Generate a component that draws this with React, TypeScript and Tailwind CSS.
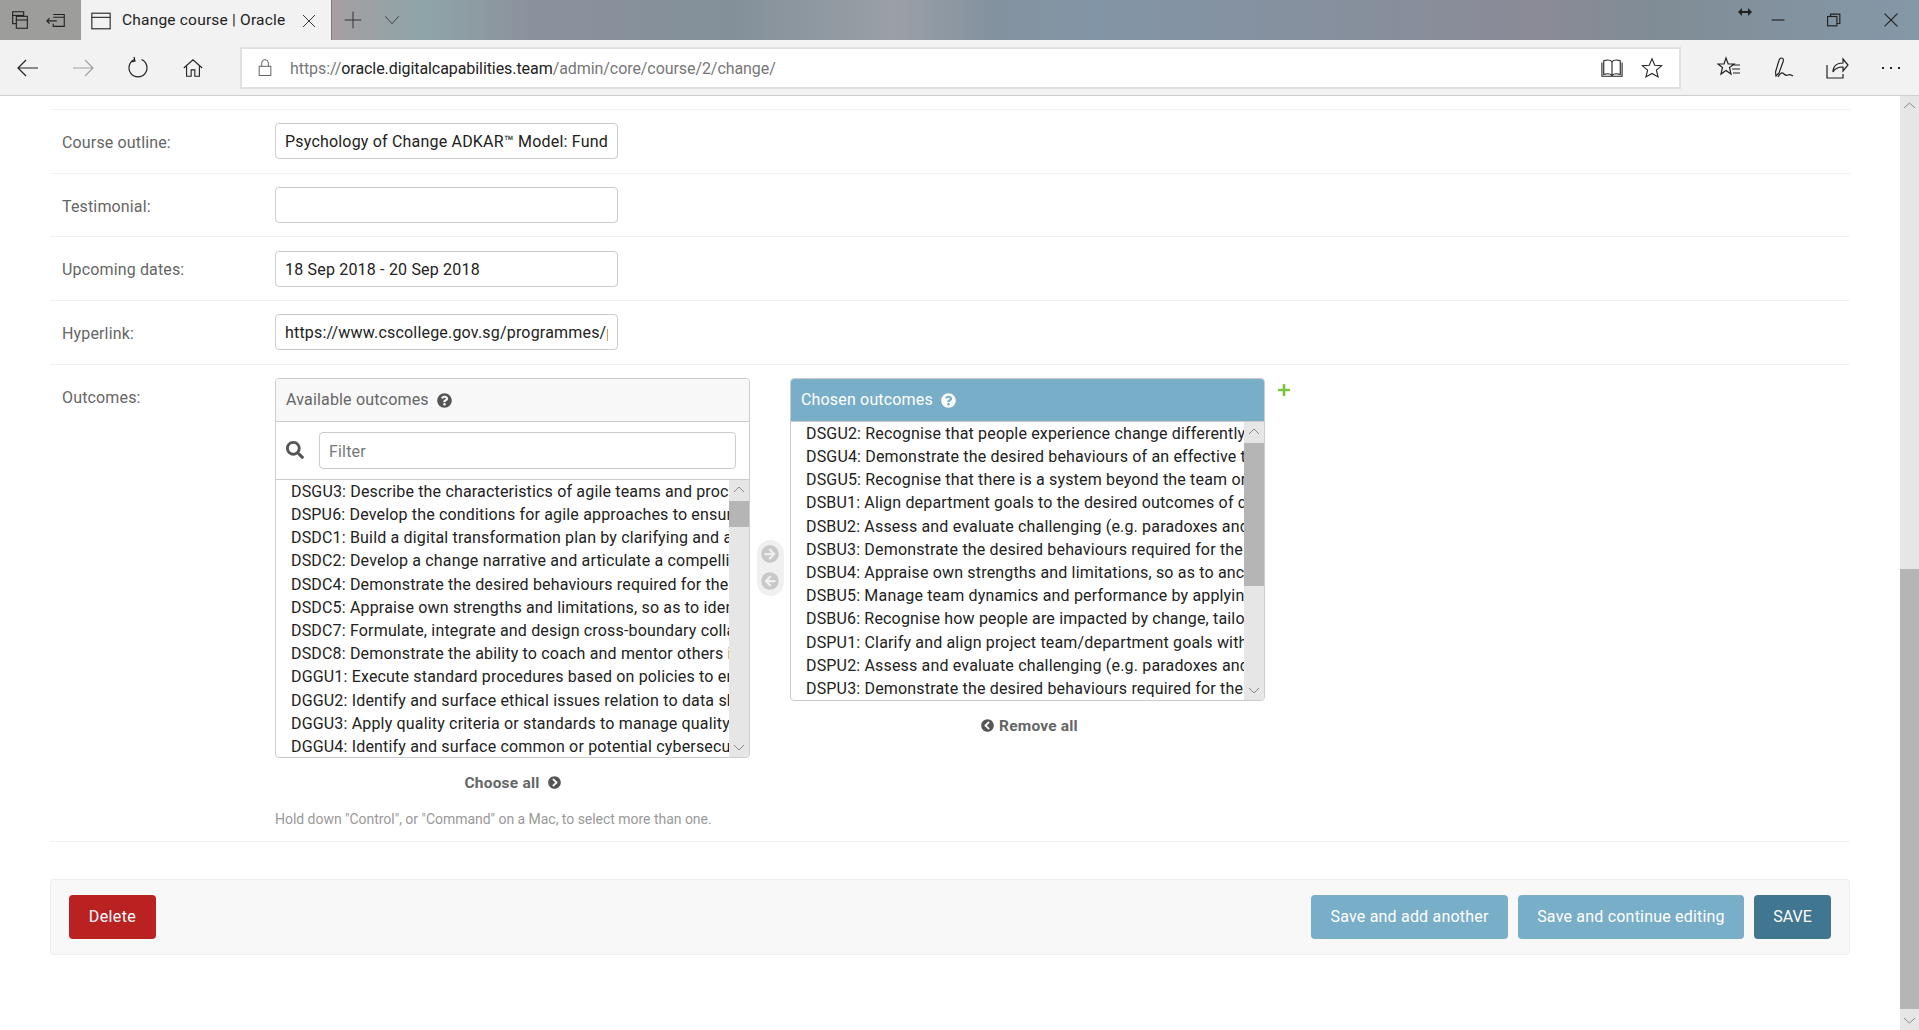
import { FaQuestionCircle, FaArrowCircleRight, FaArrowCircleLeft, FaChevronCircleLeft, FaChevronCircleRight, FaSearch, FaPlus } from "react-icons/fa";

const Ic = ({ children, w = 24, h = 24, className = "" }: any) => (
  <svg width={w} height={h} viewBox="0 0 24 24" fill="none" stroke="currentColor" strokeWidth={1.2} className={className}>{children}</svg>
);

const available = [
  "DSGU3: Describe the characteristics of agile teams and processes",
  "DSPU6: Develop the conditions for agile approaches to ensure success",
  "DSDC1: Build a digital transformation plan by clarifying and aligning",
  "DSDC2: Develop a change narrative and articulate a compelling vision",
  "DSDC4: Demonstrate the desired behaviours required for the change",
  "DSDC5: Appraise own strengths and limitations, so as to identify gaps",
  "DSDC7: Formulate, integrate and design cross-boundary collaboration",
  "DSDC8: Demonstrate the ability to coach and mentor others in change",
  "DGGU1: Execute standard procedures based on policies to ensure data",
  "DGGU2: Identify and surface ethical issues relation to data sharing",
  "DGGU3: Apply quality criteria or standards to manage quality of data",
  "DGGU4: Identify and surface common or potential cybersecurity risks",
];
const chosen = [
  "DSGU2: Recognise that people experience change differently and adapt",
  "DSGU4: Demonstrate the desired behaviours of an effective team member",
  "DSGU5: Recognise that there is a system beyond the team or department",
  "DSBU1: Align department goals to the desired outcomes of change",
  "DSBU2: Assess and evaluate challenging (e.g. paradoxes and dilemmas)",
  "DSBU3: Demonstrate the desired behaviours required for the change",
  "DSBU4: Appraise own strengths and limitations, so as to anchor growth",
  "DSBU5: Manage team dynamics and performance by applying methods",
  "DSBU6: Recognise how people are impacted by change, tailoring support",
  "DSPU1: Clarify and align project team/department goals with outcomes",
  "DSPU2: Assess and evaluate challenging (e.g. paradoxes and dilemmas)",
  "DSPU3: Demonstrate the desired behaviours required for the project",
];

function Field({ label, value }: { label: string; value: string }) {
  return (
    <div className="flex items-center h-[63.7px] border-b border-[#f0f0f0]">
      <div className="w-[225px] pl-[12px] pt-[3px] text-[16px] tracking-[0.15px] text-[#666] shrink-0">{label}</div>
      <input
        readOnly
        value={value}
        className="w-[343px] h-[36px] border border-[#ccc] rounded-[4px] px-[9px] pt-[1px] text-[16px] tracking-[0.19px] text-[#222] outline-none bg-white"
      />
    </div>
  );
}

function ListBox({ items, thumbTop, thumbH, height }: { items: string[]; thumbTop: number; thumbH: number; height: number }) {
  return (
    <div className="flex" style={{ height }}>
      <div className="flex-1 min-w-0 overflow-hidden pl-[15px] text-[16px] tracking-[0.17px] leading-[23.2px] text-[#222] whitespace-nowrap">
        {items.map((t) => (
          <div key={t} className="overflow-hidden">{t}</div>
        ))}
      </div>
      <div className="w-[20px] shrink-0 bg-[#e6e6e6] relative">
        <svg width="20" height="20" viewBox="0 0 20 20" className="absolute top-0 left-0 text-[#888]" fill="none" stroke="currentColor"><path d="M5 12l5-5 5 5" /></svg>
        <div className="absolute left-0 w-full bg-[#b5b5b5]" style={{ top: thumbTop, height: thumbH }} />
        <svg width="20" height="20" viewBox="0 0 20 20" className="absolute bottom-0 left-0 text-[#888]" fill="none" stroke="currentColor"><path d="M5 8l5 5 5-5" /></svg>
      </div>
    </div>
  );
}

export default function App() {
  return (
    <div className="w-[1919px] h-[1030px] overflow-hidden flex flex-col bg-white font-['Roboto',sans-serif]">
      {/* Title bar */}
      <div className="h-[40px] shrink-0 flex items-stretch bg-[linear-gradient(90deg,#9d9d9b_0%,#9c9c9c_17%,#a89ea2_17.2%,#8ea5a8_22%,#8b919c_27.8%,#83909a_38%,#9aa0a6_46.7%,#84929f_51.5%,#8295a6_57%,#8a8b96_80.5%,#808c95_86%,#8598a8_100%)]">
        <div className="w-[81px] flex items-center text-[#222] pl-[9px] gap-[14px]">
          <Ic w={22} h={22}><rect x="4" y="3" width="12" height="13" /><path d="M4 7h12" /><rect x="8" y="8" width="12" height="13" fill="#9d9d9b" /><path d="M8 12h12" /></Ic>
          <Ic w={22} h={22}><path d="M9 6h12v13H9v-3M9 9h12M2 13h11M5 10l-3 3 3 3" /></Ic>
        </div>
        <div className="w-[250px] bg-[#f2f2f2] flex items-center pl-[9px] pt-[1px] text-[#222] text-[15.5px] tracking-[0.2px]">
          <Ic w={22} h={22} className="shrink-0"><rect x="2" y="3.5" width="20" height="17" /><path d="M2 8h20" /></Ic>
          <span className="ml-[10px] whitespace-nowrap">Change course | Oracle</span>
          <Ic w={18} h={18} className="ml-[15px] shrink-0"><path d="M4 4l16 16M20 4L4 20" /></Ic>
        </div>
        <div className="w-[1px] bg-[#807880]" />
        <div className="flex items-center pl-[11px] text-[#333] gap-[20px]">
          <Ic w={20} h={20}><path d="M12 2v20M2 12h20" /></Ic>
          <Ic w={18} h={18}><path d="M3 7l9 10 9-10" /></Ic>
        </div>
        <div className="flex-1 relative">
          <svg width="14" height="10" viewBox="0 0 14 10" className="absolute right-[-2px] top-[7px] text-[#222]" fill="currentColor"><path d="M0 5l4-4v3h6V1l4 4-4 4V6H4v3z" /></svg>
        </div>
        <div className="flex items-center text-[#222]">
          <div className="w-[56px] flex justify-center"><Ic w={14} h={14}><path d="M1 12h22" strokeWidth={2} /></Ic></div>
          <div className="w-[56px] flex justify-center"><Ic w={14} h={14}><rect x="1" y="6" width="16" height="16" strokeWidth={2} /><path d="M6 6V2h16v16h-5" strokeWidth={2} /></Ic></div>
          <div className="w-[57px] flex justify-center"><Ic w={14} h={14}><path d="M1 1l22 22M23 1L1 23" strokeWidth={2} /></Ic></div>
        </div>
      </div>
      {/* Toolbar */}
      <div className="h-[56px] shrink-0 bg-[#f2f2f2] border-b border-[#cfcfcf] flex items-center text-[#222]">
        <div className="flex items-center pl-[16px]">
          <Ic w={24} h={24}><path d="M22 12H2M10 4l-8 8 8 8" /></Ic>
          <Ic w={24} h={24} className="ml-[31px] text-[#a0a0a0]"><path d="M2 12h20M14 4l8 8-8 8" /></Ic>
          <Ic w={24} h={24} className="ml-[31px]"><path d="M8.5 3.5a9 9 0 1 0 7 0M8 1l1 4-4 1" /></Ic>
          <Ic w={22} h={22} className="ml-[32px]"><path d="M2 12L12 3l10 9M5 10v11h5v-7h4v7h5V10" /></Ic>
        </div>
        <div className="ml-[36px] w-[1441px] h-[42px] bg-white border-2 border-[#e0e0e0] flex items-center">
          <Ic w={20} h={20} className="ml-[13px] text-[#666]"><rect x="5" y="10" width="14" height="11" /><path d="M8 10V6a4 4 0 0 1 8 0v4" /></Ic>
          <div className="ml-[15px] pt-[2px] text-[16px] tracking-[-0.07px] text-[#777] whitespace-nowrap flex-1">https://<span className="text-[#222]">oracle.digitalcapabilities.team</span>/admin/core/course/2/change/</div>
          <Ic w={22} h={22}><path d="M12 5C10 3 6 3 3 4v15c3-1 7-1 9 1 2-2 6-2 9-1V4c-3-1-7-1-9 1zM12 5v15M1 6v15h22V6" /></Ic>
          <Ic w={22} h={22} className="ml-[18px] mr-[16px]"><path d="M12 2l3 7 7.500 .6-5.700 4.800 1.800 7.300L12 18l-6.600 3.700 1.800-7.300L1.500 9.600 9 9z" /></Ic>
        </div>
        <Ic w={24} h={24} className="ml-[36px]"><path d="M9 2l2.200 6H17l-4.500 3.500L14 18l-5-3.500L4 18l1.500-6.500L1 8h6zM15 9h8M15 13h8M16 17h7" /></Ic>
        <Ic w={24} h={24} className="ml-[31px]"><path d="M9 2c2 0 3 1 2 4L7 17l-3 3-.500-4 3-10C7 4 8 2 9 2zM6 21c3-6 5-4 6-3s2 2 4 1 3 0 5 1" /></Ic>
        <Ic w={24} h={24} className="ml-[29px]"><path d="M2 9v13h16v-4M8 16c0-6 4-9 10-9V3l5 6-5 6v-4c-5 0-8 1-10 5z" /></Ic>
        <div className="ml-[33px] flex gap-[6px]">
          <span className="w-[2px] h-[2px] bg-[#222]" /><span className="w-[2px] h-[2px] bg-[#222]" /><span className="w-[2px] h-[2px] bg-[#222]" />
        </div>
      </div>
      {/* Page */}
      <div className="flex-1 flex min-h-0">
        <div className="flex-1 min-w-0 px-[50px] pt-[13px]">
          <div className="border-t border-[#f0f0f0]">
            <Field label="Course outline:" value="Psychology of Change ADKAR™ Model: Fundamentals" />
            <Field label="Testimonial:" value="" />
            <Field label="Upcoming dates:" value="18 Sep 2018 - 20 Sep 2018" />
            <Field label="Hyperlink:" value="https://www.cscollege.gov.sg/programmes/professional" />
          </div>
          {/* Outcomes */}
          <div className="h-[477px] border-b border-[#f0f0f0] flex pt-[13px]">
            <div className="w-[225px] pl-[12px] text-[16px] tracking-[0.15px] text-[#666] shrink-0 pt-[8px]">Outcomes:</div>
            <div className="flex flex-col">
              <div className="flex items-start">
                {/* Available */}
                <div className="w-[475px] flex flex-col">
                  <div className="border border-[#ccc] rounded-[4px] overflow-hidden">
                    <div className="h-[43px] bg-[#f8f8f8] border-b border-[#ccc] flex items-center pl-[10px] pt-[1px] text-[16px] tracking-[0.17px] text-[#666]">
                      Available outcomes
                      <FaQuestionCircle className="ml-[8px] text-[#555]" size={15} />
                    </div>
                    <div className="h-[58px] border-b border-[#ccc] flex items-center pl-[10px] pr-[13px] bg-white">
                      <FaSearch className="text-[#555] shrink-0" size={18} />
                      <input readOnly placeholder="Filter" className="ml-[15px] flex-1 min-w-0 h-[37px] border border-[#ccc] rounded-[4px] px-[9px] pt-[2px] text-[16px] tracking-[0.17px] placeholder:text-[#777] outline-none" />
                    </div>
                    <ListBox items={available} thumbTop={21} thumbH={26} height={277} />
                  </div>
                  <div className="mt-[15px] flex items-center justify-center text-[15.5px] tracking-[0.2px] font-bold text-[#666] leading-[20px]">
                    Choose all
                    <FaChevronCircleRight className="ml-[8px] text-[#555]" size={13} />
                  </div>
                </div>
                {/* Mover */}
                <div className="w-[40px] shrink-0 flex justify-center pt-[162px]">
                  <div className="w-[27px] h-[56px] rounded-[14px] bg-[#f0f0f0] flex flex-col items-center justify-center gap-[9px] text-[#c8c8c8]">
                    <FaArrowCircleRight size={18} />
                    <FaArrowCircleLeft size={18} />
                  </div>
                </div>
                {/* Chosen */}
                <div className="w-[475px] flex flex-col">
                  <div className="border border-[#ccc] rounded-[4px] overflow-hidden">
                    <div className="h-[43px] bg-[#79aec8] flex items-center pl-[10px] pt-[1px] text-[16px] tracking-[0.17px] text-white border-b border-[#ccc]">
                      Chosen outcomes
                      <FaQuestionCircle className="ml-[8px]" size={15} />
                    </div>
                    <ListBox items={chosen} thumbTop={21} thumbH={143} height={278} />
                  </div>
                  <div className="mt-[15px] pl-[4px] flex items-center justify-center text-[15.5px] tracking-[0.2px] font-bold text-[#666] leading-[20px]">
                    <FaChevronCircleLeft className="mr-[5px] text-[#555]" size={13} />
                    Remove all
                  </div>
                </div>
                <FaPlus className="ml-[12px] mt-[5px] text-[#7cc542]" size={14} />
              </div>
              <div className="mt-[16px] text-[14px] tracking-[-0.03px] text-[#999] leading-[20px]">Hold down "Control", or "Command" on a Mac, to select more than one.</div>
            </div>
          </div>
          {/* Submit row */}
          <div className="mt-[37px] h-[76px] bg-[#f8f8f8] border border-[#eeeeee] rounded-[4px] flex items-center pl-[18px] pr-[18px] gap-[10px]">
            <button className="h-[44px] w-[87px] pt-[1px] rounded-[4px] bg-[#ba2121] text-white text-[16px] tracking-[0.4px]">Delete</button>
            <div className="flex-1" />
            <button className="h-[44px] w-[197px] pt-[1px] rounded-[4px] bg-[#79aec8] text-white text-[16px] tracking-[0.2px]">Save and add another</button>
            <button className="h-[44px] w-[226px] pt-[1px] rounded-[4px] bg-[#79aec8] text-white text-[16px] tracking-[0.2px]">Save and continue editing</button>
            <button className="h-[44px] w-[77px] pt-[1px] rounded-[4px] bg-[#417690] text-white text-[16px]">SAVE</button>
          </div>
        </div>
        {/* Page scrollbar */}
        <div className="w-[19px] shrink-0 bg-[#e6e6e6] relative">
          <svg width="19" height="20" viewBox="0 0 19 20" className="absolute top-0 left-0 text-[#888]" fill="none" stroke="currentColor"><path d="M4 12l5.500-5 5.500 5" /></svg>
          <div className="absolute left-0 w-full top-[473px] h-[440px] bg-[#b5b5b5]" />
          <svg width="19" height="20" viewBox="0 0 19 20" className="absolute bottom-0 left-0 text-[#888]" fill="none" stroke="currentColor"><path d="M4 8l5.500 5 5.500-5" /></svg>
        </div>
      </div>
    </div>
  );
}
